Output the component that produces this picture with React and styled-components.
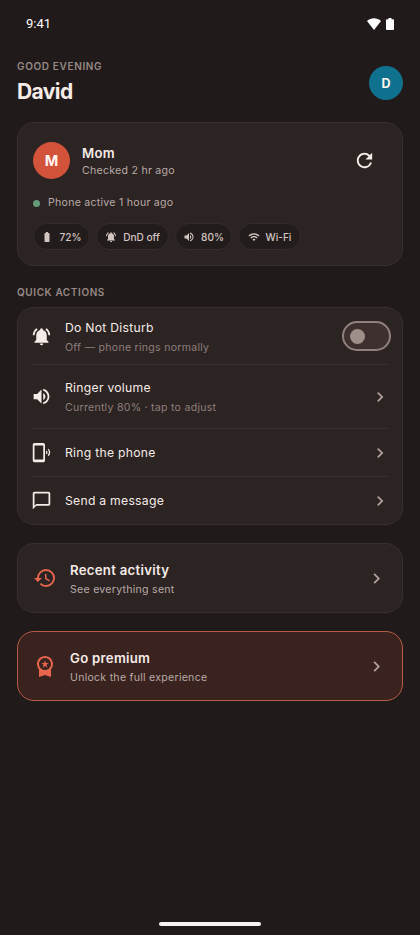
import React from 'react';
import styled, { createGlobalStyle } from 'styled-components';
import {
    MdBatteryFull,
    MdChatBubbleOutline,
    MdChevronRight,
    MdHistory,
    MdNotificationsActive,
    MdPhonelinkRing,
    MdRefresh,
    MdVolumeUp,
    MdWifi,
    MdWorkspacePremium,
} from 'react-icons/md';

const GlobalStyle = createGlobalStyle`
  * { box-sizing: border-box; }
  body {
    margin: 0;
    background: #201a1a;
    color: #f5ebe7;
    font-family: Inter, "Liberation Sans", sans-serif;
  }
  svg { display: block; flex-shrink: 0; }
`;

const Screen = styled.div`
  height: 935px;
  display: flex;
  flex-direction: column;
  overflow: hidden;
  background: #201a1a;
`;

const StatusBar = styled.div`
  height: 47px;
  padding: 0 26px;
  display: flex;
  align-items: center;
  justify-content: space-between;
  color: #fff;
  font: 400 13px/16px Roboto, sans-serif;
`;

const StatusIcons = styled.div`
  display: flex;
  gap: 5px;
`;

const Main = styled.main`
  flex: 1;
  padding: 12px 17px 0;
  display: flex;
  flex-direction: column;
`;

const Header = styled.header`
  height: 63px;
  display: flex;
  justify-content: space-between;
`;

const Overline = styled.div`
  color: #978985;
  font-size: 10px;
  line-height: 14px;
  font-weight: 600;
  letter-spacing: ${p => p.$spacing || 0.65}px;
`;

const Name = styled.h1`
  margin: 7px 0 0;
  font-size: 21px;
  line-height: 24px;
  font-weight: 700;
  letter-spacing: -0.6px;
`;

const Avatar = styled.div`
  width: ${p => p.$size}px;
  height: ${p => p.$size}px;
  margin-top: ${p => p.$top || 0}px;
  border-radius: 50%;
  display: flex;
  align-items: center;
  justify-content: center;
  flex-shrink: 0;
  background: ${p => p.$color};
  color: #fff5f0;
  font-size: ${p => p.$font}px;
  font-weight: 700;
`;

const Card = styled.section`
  border: 1px solid ${p => (p.$premium ? '#b65d47' : '#373030')};
  border-radius: 17px;
  background: ${p => (p.$premium ? '#3a231f' : '#2c2323')};
`;

const StatusCard = styled(Card)`
  height: 144px;
  padding: 18px 15px 0;
`;

const Person = styled.div`
  height: 39px;
  display: flex;
  align-items: center;
  gap: 12px;
  > svg { margin-right: 11px; }
`;

const Texts = styled.div`
  flex: 1;
  padding-top: ${p => (p.$gap ? 2 : 0)}px;
  display: flex;
  flex-direction: column;
  gap: ${p => p.$gap || 0}px;
`;

const Title = styled.div`
  font-size: ${p => (p.$strong ? 13.2 : 12.2)}px;
  line-height: 18px;
  font-weight: ${p => (p.$strong ? 600 : 400)};
  letter-spacing: ${p => (p.$strong ? 0.28 : 0.26)}px;
  white-space: nowrap;
`;

const Detail = styled.div`
  color: ${p => (p.$dim ? '#8c7f7b' : '#b8aaa6')};
  font-size: 10.6px;
  line-height: 16px;
  letter-spacing: 0.25px;
  white-space: nowrap;
`;

const Activity = styled.div`
  margin-top: 15px;
  display: flex;
  align-items: center;
  gap: 8px;
`;

const Dot = styled.span`
  width: 7px;
  height: 7px;
  border-radius: 50%;
  background: #669b7b;
`;

const Chips = styled.div`
  margin-top: 12px;
  display: flex;
  gap: 6px;
`;

const Chip = styled.div`
  width: ${p => p.$width}px;
  height: 27px;
  border: 1px solid #352d2c;
  border-radius: 14px;
  display: flex;
  align-items: center;
  justify-content: center;
  gap: 6px;
  background: #231c1c;
  color: #d3c5c0;
  font-size: 10.1px;
  font-weight: 500;
  white-space: nowrap;
`;

const SectionTitle = styled.div`
  height: 41px;
  padding-top: 19px;
`;

const Actions = styled(Card)`
  height: 218px;
  padding: 0 14px;
`;

const Row = styled.div`
  height: ${p => p.$height}px;
  display: flex;
  align-items: center;
  gap: 13px;
  border-bottom: 1px solid #373030;
  &:last-child { border-bottom: 0; }
  > svg:first-child { margin-left: -1px; }
  > svg:last-child { margin-right: -2px; }
`;

const Arrow = styled(MdChevronRight)`
  color: #b3a29e;
`;

const Switch = styled.div`
  width: 49px;
  height: 30px;
  margin-right: -3px;
  padding-left: 6px;
  border: 2px solid #91817e;
  border-radius: 15px;
  display: flex;
  align-items: center;
  background: #3d302e;
`;

const Thumb = styled.span`
  width: 15px;
  height: 15px;
  border-radius: 50%;
  background: #a08e89;
`;

const LinkCard = styled(Card)`
  height: 70px;
  margin-top: 18px;
  padding: 0 15px;
  display: flex;
  align-items: center;
  gap: 13px;
  > svg:first-child { color: #e7664d; }
`;

const HomeBar = styled.div`
  width: 102px;
  height: 4px;
  margin: 0 auto 9px;
  border-radius: 2px;
  background: #f7f3f2;
`;

const chips = [
    { icon: MdBatteryFull, text: '72%', width: 57 },
    { icon: MdNotificationsActive, text: 'DnD off', width: 73 },
    { icon: MdVolumeUp, text: '80%', width: 57 },
    { icon: MdWifi, text: 'Wi-Fi', width: 63 },
];

const actions = [
    { icon: MdVolumeUp, title: 'Ringer volume', detail: 'Currently 80% · tap to adjust', height: 64 },
    { icon: MdPhonelinkRing, title: 'Ring the phone', height: 48 },
    { icon: MdChatBubbleOutline, title: 'Send a message', height: 47 },
];

export default function App() {
    return (
        <>
            <GlobalStyle />
            <Screen>
                <StatusBar>
                    <span>9:41</span>
                    <StatusIcons>
                        <svg width="14" height="12" viewBox="0 0 14 12" fill="currentColor">
                            <path d="M0 3C4-.7 10-.7 14 3L7 12Z" />
                        </svg>
                        <svg width="8" height="12" viewBox="0 0 8 12" fill="currentColor">
                            <path d="M2.5 0h3v1.2H7q1 0 1 1V11q0 1-1 1H1q-1 0-1-1V2.2q0-1 1-1h1.5Z" />
                        </svg>
                    </StatusIcons>
                </StatusBar>

                <Main>
                    <Header>
                        <div>
                            <Overline>GOOD EVENING</Overline>
                            <Name>David</Name>
                        </div>
                        <Avatar $size={34} $top={7} $color="#10718f" $font={12.5}>D</Avatar>
                    </Header>

                    <StatusCard>
                        <Person>
                            <Avatar $size={37} $color="#d3533a" $font={14.5}>M</Avatar>
                            <Texts $gap={1}>
                                <Title $strong>Mom</Title>
                                <Detail>Checked 2 hr ago</Detail>
                            </Texts>
                            <MdRefresh size={23} />
                        </Person>
                        <Activity>
                            <Dot />
                            <Detail>Phone active 1 hour ago</Detail>
                        </Activity>
                        <Chips>
                            {chips.map(({ icon: Icon, text, width }) => (
                                <Chip key={text} $width={width}>
                                    <Icon size={12} />
                                    {text}
                                </Chip>
                            ))}
                        </Chips>
                    </StatusCard>

                    <SectionTitle>
                        <Overline $spacing={0.6}>QUICK ACTIONS</Overline>
                    </SectionTitle>
                    <Actions>
                        <Row $height={57}>
                            <MdNotificationsActive size={21} />
                            <Texts $gap={3}>
                                <Title>Do Not Disturb</Title>
                                <Detail $dim>Off — phone rings normally</Detail>
                            </Texts>
                            <Switch><Thumb /></Switch>
                        </Row>
                        {actions.map(({ icon: Icon, title, detail, height }) => (
                            <Row key={title} $height={height}>
                                <Icon size={21} />
                                <Texts $gap={detail ? 3 : 0}>
                                    <Title>{title}</Title>
                                    {detail && <Detail $dim>{detail}</Detail>}
                                </Texts>
                                <Arrow size={20} />
                            </Row>
                        ))}
                    </Actions>

                    <LinkCard>
                        <MdHistory size={24} />
                        <Texts $gap={3}>
                            <Title $strong>Recent activity</Title>
                            <Detail>See everything sent</Detail>
                        </Texts>
                        <Arrow size={21} />
                    </LinkCard>
                    <LinkCard $premium>
                        <MdWorkspacePremium size={24} />
                        <Texts $gap={3}>
                            <Title $strong>Go premium</Title>
                            <Detail>Unlock the full experience</Detail>
                        </Texts>
                        <Arrow size={21} />
                    </LinkCard>
                </Main>
                <HomeBar />
            </Screen>
        </>
    );
}
